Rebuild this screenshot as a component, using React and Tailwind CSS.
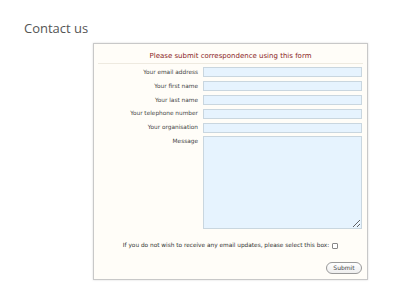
import React from "react";

const fields = [
  "Your email address",
  "Your first name",
  "Your last name",
  "Your telephone number",
  "Your organisation",
];

const App = () => {
  return (
    <div className="w-[400px] h-[300px] bg-white overflow-hidden" style={{ fontFamily: "'DejaVu Sans', Verdana, sans-serif" }}>
      {/* Heading */}
      <h1 className="pt-[19px] pl-[24px] text-[13px] leading-[19px] text-[#555555]" style={{ fontFamily: "'Open Sans', Lato, sans-serif" }}>
        Contact us
      </h1>

      {/* Form box */}
      <div className="ml-[93px] mt-[5px] w-[275px] h-[237px] bg-[#fffdf8] border border-[#c8c8c8] shadow-[0_0_2px_rgba(0,0,0,0.15)] px-[4px]">
        <div className="h-[20px] border-b border-[#eeeae0] flex items-end justify-center pb-[2px] text-[7px] text-[#8a1c1c]">
          Please submit correspondence using this form
        </div>

        <div className="pt-[3px] flex flex-col gap-[3.6px]">
          {fields.map((f) => (
            <div key={f} className="flex items-center">
              <label className="w-[105px] text-right pr-[5px] text-[5.8px] text-[#444]">{f}</label>
              <input className="w-[159px] h-[10.3px] bg-[#e6f3fe] border border-[#c9d6df]" />
            </div>
          ))}
          <div className="flex items-start">
            <label className="w-[105px] text-right pr-[5px] text-[5.8px] text-[#444] pt-[1px]">Message</label>
            <textarea className="w-[159px] h-[93px] bg-[#e6f3fe] border border-[#c9d6df] resize-y" />
          </div>
        </div>

        <div className="mt-[12px] flex items-center justify-center gap-[3px] text-[5.8px] text-[#333]">
          <span>If you do not wish to receive any email updates, please select this box:</span>
          <span className="w-[6px] h-[6px] border border-[#888] rounded-[1px] bg-white inline-block" />
        </div>

        <div className="mt-[12px] flex justify-end pr-[1px]">
          <button className="w-[36px] h-[12px] rounded-full border border-[#999] bg-gradient-to-b from-white to-[#eeeeee] text-[6px] text-[#444] leading-none">
            Submit
          </button>
        </div>
      </div>
    </div>
  );
};

export default App;
